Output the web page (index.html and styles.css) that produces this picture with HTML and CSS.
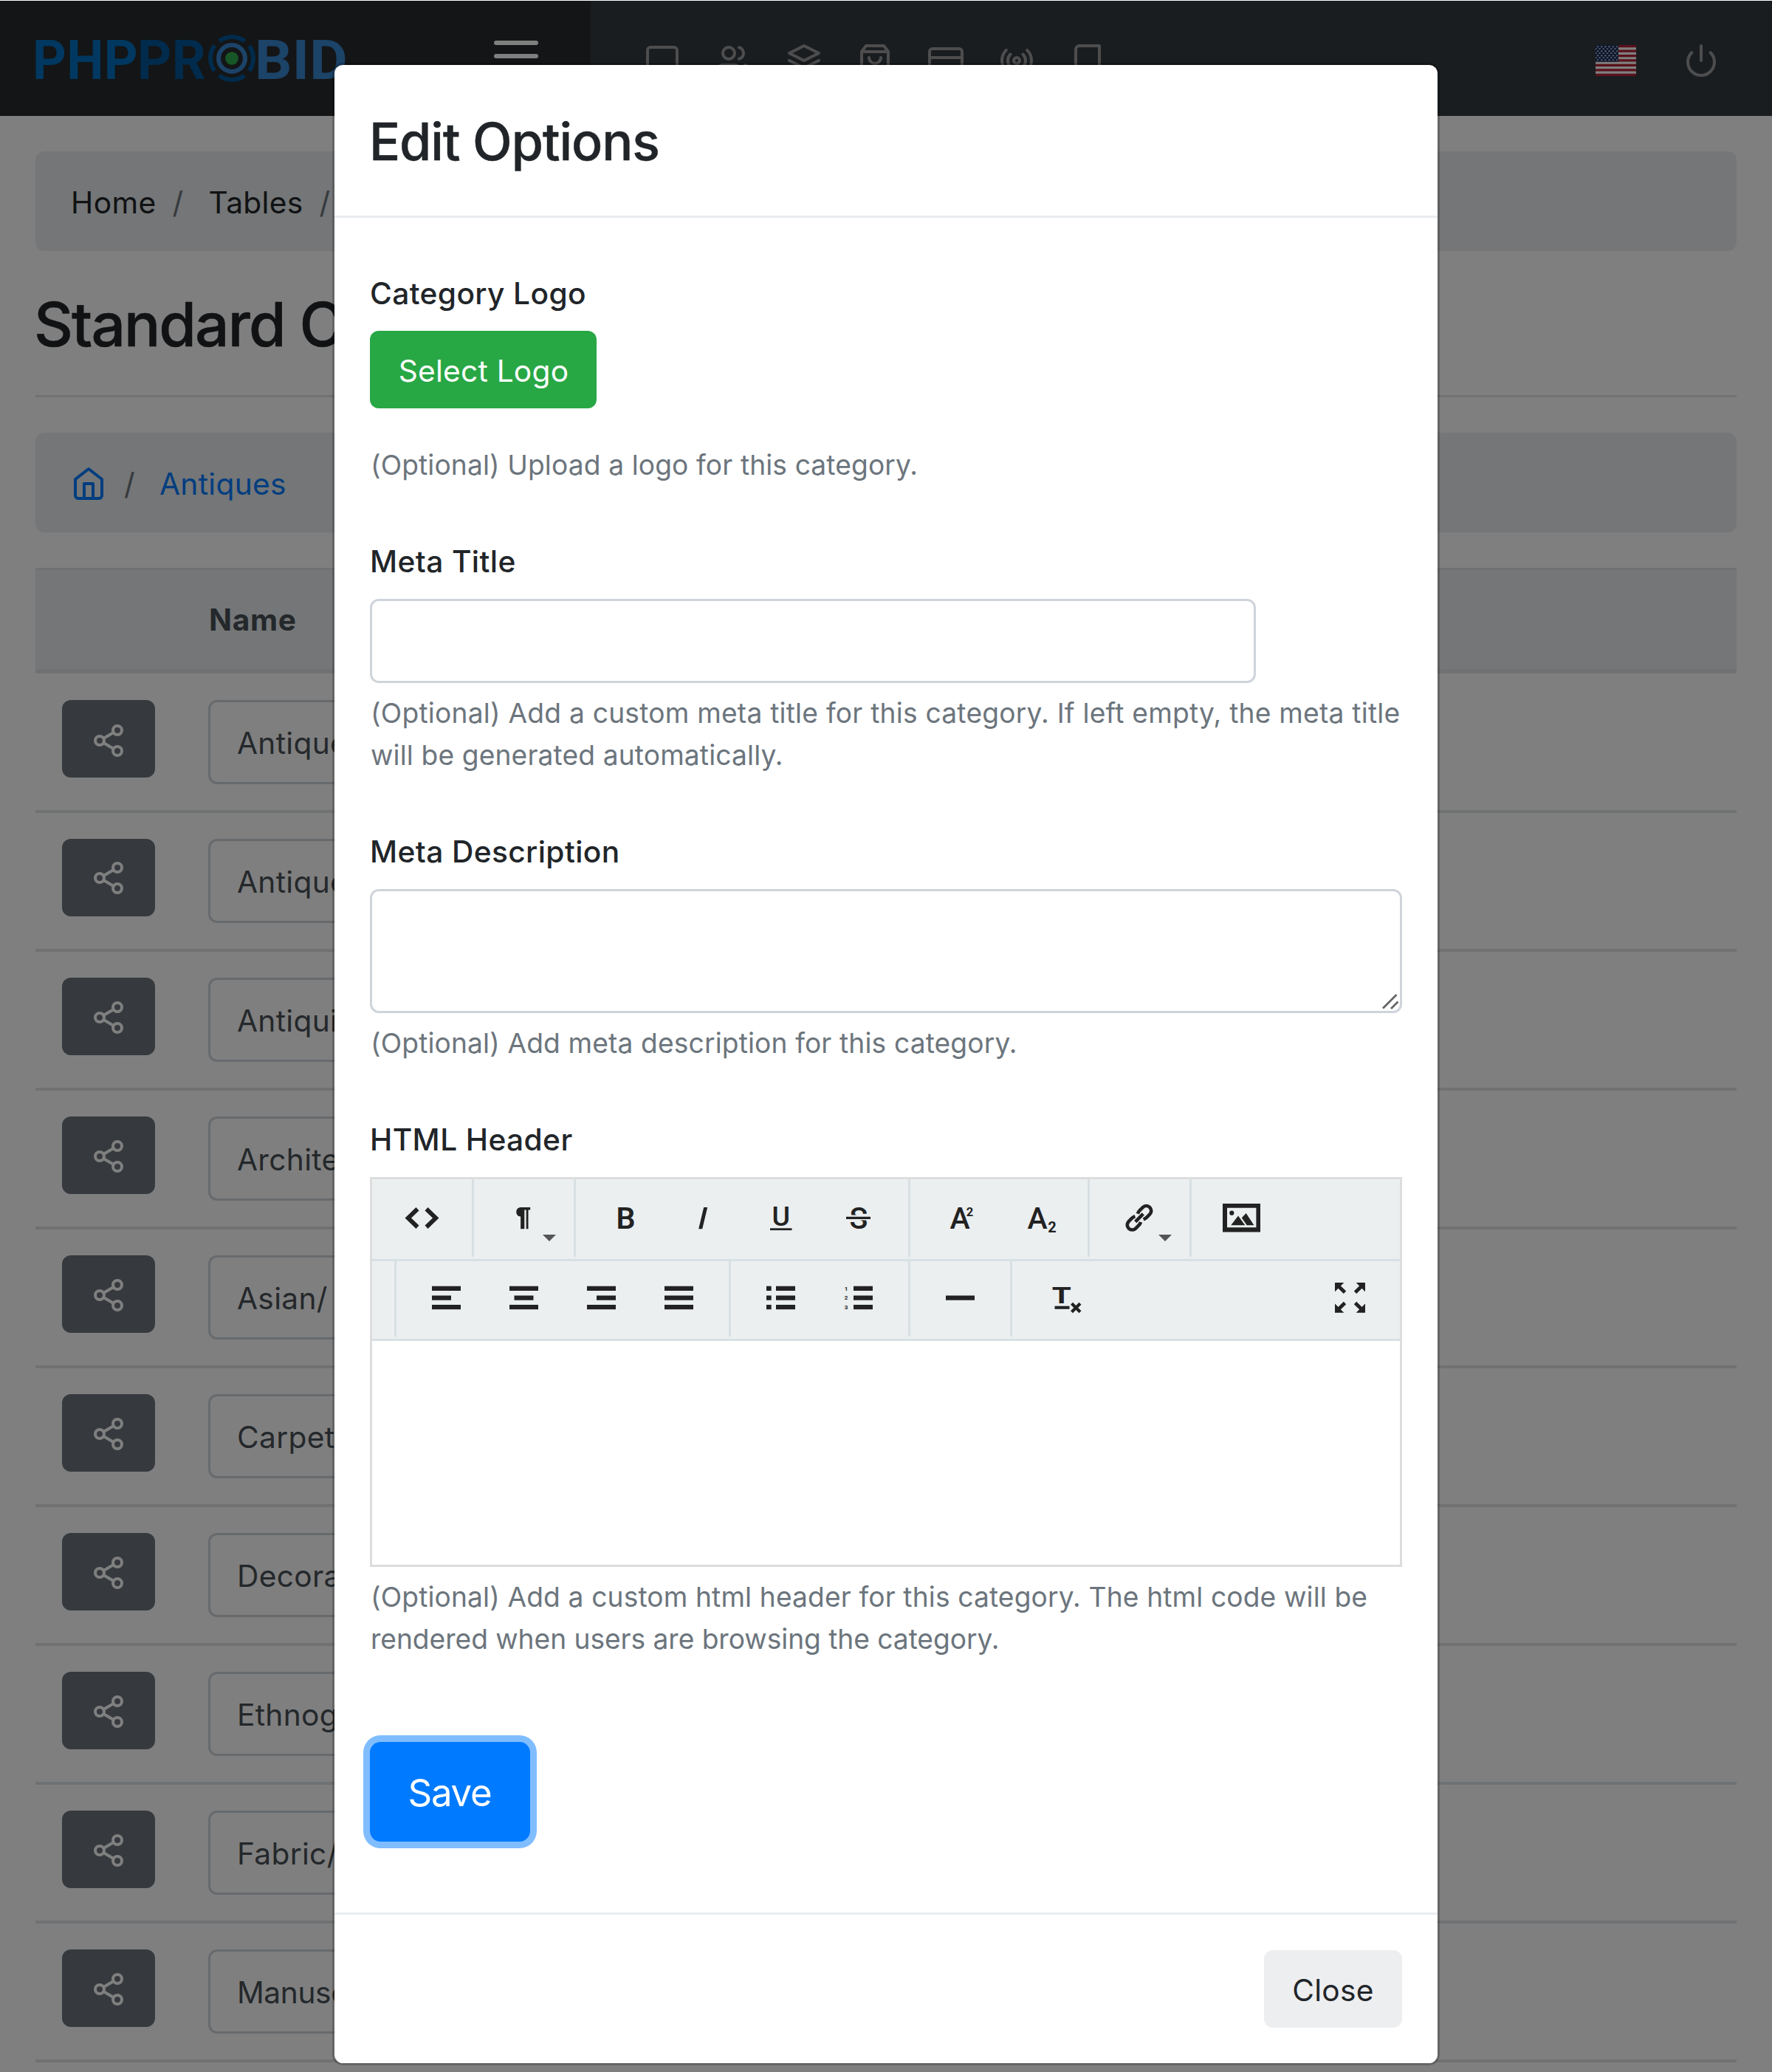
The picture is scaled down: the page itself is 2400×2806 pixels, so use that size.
FILE: index.html
```html
<!DOCTYPE html>
<html lang="en">
<head>
<meta charset="utf-8">
<title>Standard Categories</title>
<link rel="stylesheet" href="styles.css">
</head>
<body>
<svg class="defs" aria-hidden="true">
  <symbol id="share" viewBox="0 0 24 24"><circle cx="18" cy="5" r="3"/><circle cx="6" cy="12" r="3"/><circle cx="18" cy="19" r="3"/><path d="M8.59 13.51l6.83 3.98M15.41 6.51l-6.82 3.98"/></symbol>
  <symbol id="caret" viewBox="0 0 18 9"><path d="M0 0h18L9 9z" fill="#555"/></symbol>
</svg>

<header class="topbar">
  <div class="brand">
    <svg class="logo" width="430" height="70" viewBox="0 0 430 70">
      <g font-family="Roboto" font-weight="700" font-size="75">
        <text x="-4" y="62.5" textLength="143" lengthAdjust="spacingAndGlyphs" fill="#0070c2">PHP</text>
        <text x="138" y="62.5" textLength="93" lengthAdjust="spacingAndGlyphs" fill="#005698">PR</text>
        <text x="297" y="62.5" textLength="126" lengthAdjust="spacingAndGlyphs" fill="#3886d0">BID</text>
      </g>
      <g fill="none">
        <circle cx="266" cy="35" r="29" stroke="#005698" stroke-width="6" stroke-dasharray="36.5 9.05" stroke-dashoffset="18.25"/>
        <circle cx="266" cy="35" r="18" stroke="#3886d0" stroke-width="6"/>
      </g>
      <circle cx="266" cy="35" r="8.8" fill="#2eae4e"/>
    </svg>
    <div class="burger"><i></i><i></i><i></i></div>
  </div>
  <nav class="nav">
    <svg viewBox="0 0 24 24"><rect x="2" y="3" width="20" height="14" rx="2"/><path d="M8 21h8M12 17v4"/></svg>
    <svg viewBox="0 0 24 24"><path d="M17 21v-2a4 4 0 0 0-4-4H5a4 4 0 0 0-4 4v2"/><circle cx="9" cy="7" r="4"/><path d="M23 21v-2a4 4 0 0 0-3-3.87M16 3.13a4 4 0 0 1 0 7.75"/></svg>
    <svg viewBox="0 0 24 24"><path d="M12 2L2 7l10 5 10-5-10-5zM2 17l10 5 10-5M2 12l10 5 10-5"/></svg>
    <svg viewBox="0 0 24 24"><path d="M6 2L3 6v14a2 2 0 0 0 2 2h14a2 2 0 0 0 2-2V6l-3-4zM3 6h18M16 10a4 4 0 0 1-8 0"/></svg>
    <svg viewBox="0 0 24 24"><rect x="1" y="4" width="22" height="16" rx="2"/><path d="M1 10h22"/></svg>
    <svg viewBox="0 0 24 24"><circle cx="12" cy="12" r="2"/><path d="M16.24 7.76a6 6 0 0 1 0 8.49m-8.48-.01a6 6 0 0 1 0-8.49m11.31-2.82a10 10 0 0 1 0 14.14m-14.14 0a10 10 0 0 1 0-14.14"/></svg>
    <svg viewBox="0 0 24 24"><path d="M4 19.5A2.5 2.5 0 0 1 6.500 17H20M6.500 2H20v20H6.500A2.500 2.500 0 0 1 4 19.500v-15A2.500 2.500 0 0 1 6.500 2z"/></svg>
  </nav>
  <div class="tools">
    <svg class="flag" width="55" height="42" viewBox="0 0 55 42">
      <defs><pattern id="stars" width="5.2" height="6" patternUnits="userSpaceOnUse"><path d="M2 1.200h2v2h-2zM4.600 4.200h.6v2h-.6zM0 4.200h1.400v2h-1.400z" fill="#c9d0e0"/></pattern></defs>
      <rect width="55" height="42" fill="#b22234"/>
      <path d="M0 4.850h55M0 11.300h55M0 17.750h55M0 24.200h55M0 30.700h55M0 37.150h55" stroke="#fff" stroke-width="3.230"/>
      <rect width="31" height="22.600" fill="#192f5d"/>
      <rect width="30.500" height="22" fill="url(#stars)"/>
    </svg>
    <svg class="power" viewBox="0 0 24 24"><path d="M18.360 6.640a9 9 0 1 1-12.730 0M12 2v10"/></svg>
  </div>
</header>

<main class="page">
  <div class="crumbs first"><span class="home">Home</span><span class="sep">/</span><span>Tables</span><span class="sep">/</span></div>
  <h1>Standard C</h1>
  <hr>
  <div class="crumbs links"><svg class="house" viewBox="0 0 24 24"><path d="M3 9l9-7 9 7v11a2 2 0 0 1-2 2H5a2 2 0 0 1-2-2zM9 22V12h6v10"/></svg><span class="sep">/</span><span>Antiques</span></div>
  <div class="table">
    <div class="thead">Name</div>
    <div class="row"><div class="share"><svg><use href="#share"/></svg></div><div class="cell">Antique</div></div>
    <div class="row"><div class="share"><svg><use href="#share"/></svg></div><div class="cell">Antique</div></div>
    <div class="row"><div class="share"><svg><use href="#share"/></svg></div><div class="cell">Antiqui</div></div>
    <div class="row"><div class="share"><svg><use href="#share"/></svg></div><div class="cell">Archite</div></div>
    <div class="row"><div class="share"><svg><use href="#share"/></svg></div><div class="cell">Asian/</div></div>
    <div class="row"><div class="share"><svg><use href="#share"/></svg></div><div class="cell">Carpet</div></div>
    <div class="row"><div class="share"><svg><use href="#share"/></svg></div><div class="cell">Decora</div></div>
    <div class="row"><div class="share"><svg><use href="#share"/></svg></div><div class="cell">Ethnog</div></div>
    <div class="row"><div class="share"><svg><use href="#share"/></svg></div><div class="cell">Fabric/</div></div>
    <div class="row"><div class="share"><svg><use href="#share"/></svg></div><div class="cell tight">Manusc</div></div>
  </div>
</main>

<div class="backdrop"></div>

<section class="modal">
  <div class="modal-head"><h2>Edit Options</h2></div>
  <div class="modal-body">
    <div class="field f-logo">
      <div class="label">Category Logo</div>
      <button class="btn green">Select Logo</button>
      <p class="help">(Optional) Upload a logo for this category.</p>
    </div>
    <div class="field f-title">
      <div class="label">Meta Title</div>
      <div class="input"></div>
      <p class="help">(Optional) Add a custom meta title for this category. If left empty, the meta title<br><span class="snug">will be generated automatically.</span></p>
    </div>
    <div class="field f-desc">
      <div class="label">Meta Description</div>
      <div class="input area"><svg class="grip" width="24" height="24" viewBox="0 0 24 24"><path d="M2 21.500L20.500 3M13 22L22.500 12.500"/></svg></div>
      <p class="help snug">(Optional) Add meta description for this category.</p>
    </div>
    <div class="field f-html">
      <div class="label">HTML Header</div>
      <div class="editor">
        <div class="bar">
          <div class="group"><svg class="tool" viewBox="0 0 105 105"><path d="M44.500 38l4 4.500-10.500 10 10.500 10-4 4.500-15-14.500zM60.500 38l-4 4.500 10.500 10-10.500 10 4 4.500 15-14.500z"/></svg></div>
          <div class="group"><div class="drop"><svg class="tool" viewBox="0 0 105 105"><path d="M49 38h12.200v3.500h-2.700v25.800h-2.800V41.500h-2.400v25.800h-5.200V50.500c-3.500 0-5.800-2.500-5.800-6.200s2.300-6.300 6.700-6.300z"/></svg><svg class="caret"><use href="#caret"/></svg></div></div>
          <div class="group">
            <svg class="tool" viewBox="0 0 105 105"><text x="52.600" y="67.200" font-size="41" font-weight="600">B</text></svg>
            <svg class="tool" viewBox="0 0 105 105"><path d="M53.200 38h5l-7 29.300h-5z"/></svg>
            <svg class="tool" viewBox="0 0 105 105"><text x="52.800" y="62.800" font-size="37.500" font-weight="500">U</text><path d="M38 66.300h29.500v2.800H38z"/></svg>
            <svg class="tool" viewBox="0 0 105 105"><text x="52.800" y="67" font-size="41" font-weight="500">S</text><path d="M36 48.500h33v7H36z" fill="#ebeff0"/><path d="M36 50.800h33v3.200H36z"/></svg>
          </div>
          <div class="group">
            <svg class="tool" viewBox="0 0 105 105"><text x="52" y="67.200" font-size="41" font-weight="500">A</text><text x="65.500" y="49.800" font-size="16.500" font-weight="700">2</text></svg>
            <svg class="tool" viewBox="0 0 105 105"><text x="52" y="67.200" font-size="41" font-weight="500">A</text><text x="72" y="72" font-size="20" font-weight="700">2</text></svg>
          </div>
          <div class="group"><div class="drop"><svg class="tool" viewBox="0 0 105 105"><g transform="translate(52 52.300) rotate(-45)" fill="none" stroke="#222" stroke-width="4.600"><path d="M2.500-5.500Q5-6.700 8-6.700H13.500A6.700 6.700 0 0 1 13.500 6.700H8Q5 6.700 2.500 5.500M-2.500-5.500Q-5-6.700-8-6.700H-13.500A6.700 6.700 0 0 0-13.500 6.700H-8Q-5 6.700-2.500 5.500M-7.500 0H7.500"/></g></svg><svg class="caret"><use href="#caret"/></svg></div></div>
          <div class="group last"><svg class="tool" viewBox="0 0 105 105"><path fill-rule="evenodd" d="M27 33h51v38.500H27zM33 38.800v26.500h39.400V38.800z"/><circle cx="39.300" cy="45.700" r="3.100"/><path d="M38.200 62.300L48 49.500l9.300 12.800zM52.800 52.300l5.900-6.300 10.700 16.300h-9.700z"/></svg></div>
        </div>
        <div class="bar second">
          <div class="group stub"></div>
          <div class="group">
            <svg class="tool" viewBox="0 3 105 99"><path d="M33 36.800h39V43H33zM33 49.500h26v6.200H33zM33 62.100h39v6.200H33z"/></svg>
            <svg class="tool" viewBox="0 3 105 99"><path d="M33 36.800h39V43H33zM39.500 49.500h26v6.200h-26zM33 62.100h39v6.200H33z"/></svg>
            <svg class="tool" viewBox="0 3 105 99"><path d="M33 36.800h39V43H33zM46 49.500h26v6.200H46zM33 62.100h39v6.200H33z"/></svg>
            <svg class="tool" viewBox="0 3 105 99"><path d="M33 36.800h39V43H33zM33 49.500h39v6.200H33zM33 62.100h39v6.200H33z"/></svg>
          </div>
          <div class="group">
            <svg class="tool" viewBox="0 3 105 99"><path d="M33 36.800h6.700V43H33zM33 49.500h6.700v6.200H33zM33 62.100h6.700v6.200H33zM46 36.800h26V43H46zM46 49.500h26v6.200H46zM46 62.100h26v6.200H46z"/></svg>
            <svg class="tool" viewBox="0 3 105 99"><path d="M46 36.800h26V43H46zM46 49.500h26v6.200H46zM46 62.100h26v6.200H46z"/><g font-size="8" font-weight="700"><text x="36" y="42.600">1</text><text x="36" y="55.300">2</text><text x="36" y="68">3</text></g></svg>
          </div>
          <div class="group"><svg class="tool" viewBox="0 3 105 99"><path d="M33 49.500h39v6.200H33z"/></svg></div>
          <div class="group last">
            <svg class="tool" viewBox="0 3 105 99"><text x="51.800" y="59.700" font-size="31" font-weight="700" textLength="26" lengthAdjust="spacingAndGlyphs">T</text><path d="M42.500 63.700h20v4.100h-20z"/><path d="M65.500 60.300l11.500 11.500M77 60.300L65.500 71.800" stroke="#222" stroke-width="4.200"/></svg>
          </div>
          <div class="group full"><svg class="tool" viewBox="0 3 105 99"><path d="M32 32h12.300L32 44.300zM73 32H60.700L73 44.300zM32 72.800h12.300L32 60.500zM73 72.800H60.700L73 60.500z"/><path d="M36 36l9.500 9.300M69 36l-9.500 9.300M36 68.800l9.500-9.300M69 68.800l-9.500-9.300" stroke="#222" stroke-width="4.800"/></svg></div>
        </div>
        <div class="canvas"></div>
      </div>
      <p class="help"><span class="snug">(Optional) Add a custom html header for this category. The html code will be</span><br><span class="snugger">rendered when users are browsing the category.</span></p>
    </div>
    <button class="save">Save</button>
  </div>
  <div class="modal-foot"><button class="btn close">Close</button></div>
</section>
</body>
</html>
```
FILE: styles.css
```css
* { box-sizing: border-box; }
body {
  margin: 0;
  width: 2400px;
  height: 2806px;
  position: relative;
  overflow: hidden;
  background: #fff;
  color: #212529;
  font-family: Inter, "Liberation Sans", sans-serif;
  font-size: 40.7px;
  letter-spacing: .3px;
  line-height: 63px;
}
h1, h2, p, hr { margin: 0; }
button { font: inherit; letter-spacing: inherit; border: 0; }
svg { display: block; flex: none; }
.defs { position: absolute; width: 0; height: 0; }

/* top bar */
.topbar {
  margin-top: 1px;
  height: 156px;
  display: flex;
  background: #343a40;
}
.brand {
  width: 800px;
  padding: 43px 71px 0 48px;
  display: flex;
  justify-content: space-between;
  background: #292b2d;
}
.logo { overflow: visible; }
.burger {
  width: 60px;
  padding-top: 11px;
  display: flex;
  flex-direction: column;
  gap: 12px;
}
.burger i { height: 6px; border-radius: 3px; background: #fff; }
.nav { display: flex; gap: 48px; padding: 57px 0 0 73px; flex: 1; }
.nav svg, .power, .house, .share svg {
  width: 48px;
  height: 48px;
  fill: none;
  stroke: #9a9b9c;
  stroke-width: 2;
  stroke-linecap: round;
  stroke-linejoin: round;
}
.tools { display: flex; gap: 64px; padding: 57px 72px 0 0; }
.flag { margin-top: 3px; }

/* page behind the dialog */
.page { padding: 48px 48px 0; }
.crumbs {
  height: 135px;
  padding: 3px 48px 0;
  display: flex;
  align-items: center;
  border-radius: 12px;
  background: #e9ecef;
}
.sep { width: 49px; margin-left: 23px; color: #6c757d; }
.first .sep { margin-left: 22px; }
.home { letter-spacing: .4px; }
.links { margin-top: 48px; color: #007bff; }
.links .sep { margin-left: 24px; width: 48px; }
.house { stroke: #007bff; margin-bottom: 1px; }
h1 {
  margin: 51px 0 46px -2px;
  font-size: 82px;
  line-height: 98px;
  font-weight: 500;
  letter-spacing: -1.95px;
  -webkit-text-stroke: .5px;
}
hr { border: 0; height: 3px; background: #e5e5e5; }
.table { margin-top: 48px; }
.thead {
  height: 143px;
  padding-left: 235px;
  border-top: 3px solid #dee2e6;
  border-bottom: 6px solid #dee2e6;
  background: #e9ecef;
  color: #495057;
  font-weight: 700;
  letter-spacing: .7px;
  line-height: 135px;
}
.row {
  height: 188px;
  padding: 35px 36px 0;
  display: flex;
  gap: 72px;
  border-bottom: 4px solid #dee2e6;
}
.row:nth-child(2) { height: 189px; padding-top: 36px; }
.share {
  width: 126px;
  height: 105px;
  padding: 30px 39px 0;
  border-radius: 12px;
  background: #6c757d;
}
.row:nth-child(2) .share { padding-top: 31px; }
.row:nth-child(3) .share { padding-top: 29px; }
.share svg { stroke: #fff; }
.cell {
  width: 600px;
  height: 114px;
  padding: 1px 36px 0;
  border: 3px solid #ced4da;
  border-radius: 12px;
  color: #495057;
  line-height: 109px;
}
.tight { letter-spacing: -.4px; }
.backdrop { position: absolute; inset: 1px 0 0; background: rgba(0, 0, 0, .5); }

/* dialog */
.modal {
  position: absolute;
  left: 450px;
  top: 85px;
  width: 1500px;
  height: 2712px;
  border: 3px solid rgba(0, 0, 0, .2);
  border-radius: 14.4px;
  background: #fff;
  background-clip: padding-box;
}
.modal-head { height: 207px; padding: 50px 48px 0; border-bottom: 3px solid #e9ecef; }
h2 {
  margin-left: -1px;
  font-size: 70px;
  line-height: 108px;
  font-weight: 500;
  letter-spacing: -1.1px;
  -webkit-text-stroke: .4px;
}
.modal-body { height: 2295px; padding: 71px 48px 0; }
.label { height: 63px; margin-bottom: 19px; font-weight: 500; letter-spacing: .38px; }
.help {
  margin-top: 12px;
  margin-left: 1px;
  color: #6c757d;
  font-size: 37.2px;
  line-height: 57px;
  letter-spacing: .21px;
  white-space: nowrap;
}
.snug { letter-spacing: .12px; }
.snugger { letter-spacing: -.06px; }
.f-logo { height: 363px; }
.f-logo .help { margin-top: 48px; letter-spacing: .1px; }
.f-title { height: 393px; }
.f-desc { height: 390px; }
.f-html { height: 847px; }
.btn {
  display: flex;
  align-items: center;
  justify-content: center;
  height: 105px;
  padding: 3px 0 0;
  border-radius: 12px;
}
.green { width: 307px; padding-left: 1px; background: #28a745; color: #fff; letter-spacing: .22px; }
.close { width: 187px; background: #edeef0; color: #212529; }
.input {
  width: 1200px;
  height: 114px;
  border: 3px solid #ced4da;
  border-radius: 12px;
}
.area { position: relative; width: 1398px; height: 168px; }
.grip {
  position: absolute;
  right: 1px;
  bottom: 1px;
  fill: none;
  stroke: #666;
  stroke-width: 2.8;
}

/* rich text editor */
.editor { width: 1398px; height: 528px; border: 3px solid #ddd; }
.bar { display: flex; height: 108px; background: #ebeff0; }
.bar.second { height: 111px; border: solid #d7e0e2; border-width: 3px 0; }
.group {
  display: flex;
  height: 105px;
  padding: 0 15px;
  border-right: 3px solid #d7e0e2;
}
.second .group { height: 102px; }
.stub { width: 33px; padding: 0; }
.last, .full { border-right: 0; }
.full { margin-left: auto; }
.tool {
  width: 105px;
  height: 105px;
  fill: #222;
  font-family: Roboto, sans-serif;
  text-anchor: middle;
  letter-spacing: 0;
}
.second .tool { height: 99px; }
.drop { position: relative; }
.caret { position: absolute; left: 78px; top: 75px; width: 18px; height: 9px; }

.save {
  display: flex;
  align-items: center;
  justify-content: center;
  width: 217px;
  height: 135px;
  padding: 1px 1px 0 0;
  border-radius: 14.4px;
  background: #007bff;
  color: #fff;
  font-size: 51px;
  letter-spacing: -1.3px;
  box-shadow: 0 0 0 9px #80bdff;
}
.modal-foot {
  height: 204px;
  padding: 48px;
  display: flex;
  justify-content: flex-end;
  border-top: 3px solid #e9ecef;
}
```
